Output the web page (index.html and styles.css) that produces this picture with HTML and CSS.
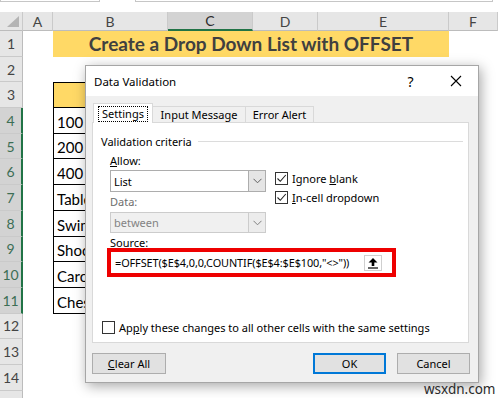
FILE: index.html
```html
<!DOCTYPE html>
<html>
<head>
    <meta charset="UTF-8">
    <title>Data Validation</title>
    <link rel="stylesheet" href="styles.css">
</head>
<body>
    <div class="topbar">
        <div class="namebox"></div>
        <div class="fbar"></div>
    </div>

    <div class="sheet">
        <div class="ch corner"><span class="tri"></span></div>
        <div class="ch">A</div>
        <div class="ch">B</div>
        <div class="ch sel">C</div>
        <div class="ch">D</div>
        <div class="ch">E</div>
        <div class="ch">F</div>

        <div class="rh">1</div><div></div><div class="title">Create a Drop Down List with OFFSET</div><div></div>
        <div class="rh">2</div><div></div><div></div><div></div><div></div><div></div><div></div>
        <div class="rh">3</div><div></div><div class="tb head">Sports</div><div></div><div></div><div></div><div></div>
        <div class="rh sel">4</div><div></div><div class="tb">100 Meter Sprint</div><div></div><div></div><div></div><div></div>
        <div class="rh sel">5</div><div></div><div class="tb">200 Meter Sprint</div><div></div><div></div><div></div><div></div>
        <div class="rh sel">6</div><div></div><div class="tb">400 Meter Sprint</div><div></div><div></div><div></div><div></div>
        <div class="rh sel">7</div><div></div><div class="tb">Table Tennis</div><div></div><div></div><div></div><div></div>
        <div class="rh sel">8</div><div></div><div class="tb">Swimming</div><div></div><div></div><div></div><div></div>
        <div class="rh sel">9</div><div></div><div class="tb">Shooting</div><div></div><div></div><div></div><div></div>
        <div class="rh sel">10</div><div></div><div class="tb">Carom</div><div></div><div></div><div></div><div></div>
        <div class="rh sel">11</div><div></div><div class="tb">Chess</div><div></div><div></div><div></div><div></div>
        <div class="rh">12</div><div></div><div></div><div></div><div></div><div></div><div></div>
        <div class="rh">13</div><div></div><div></div><div></div><div></div><div></div><div></div>
        <div class="rh">14</div><div></div><div></div><div></div><div></div><div></div><div></div>
        <div class="rh">15</div><div></div><div></div><div></div><div></div><div></div><div></div>
    </div>

    <div class="dialog">
        <div class="dlg-title">
            <span>Data Validation</span>
            <span class="tbtn">?</span>
            <span class="tbtn">
                <svg width="12" height="12" viewBox="0 0 12 12"><path d="M1 1 L11 11 M11 1 L1 11" stroke="#000" stroke-width="1.1" fill="none"/></svg>
            </span>
        </div>

        <div class="dlg-body">
            <div class="tabs">
                <div class="tab active"><span class="focus">Settings</span></div>
                <div class="tab">Input Message</div>
                <div class="tab">Error Alert</div>
            </div>

            <div class="panel">
                <div class="legend"><span>Validation criteria</span><span class="rule"></span></div>

                <div class="criteria">
                    <div class="cols">
                        <div class="left">
                            <div class="lbl"><u>A</u>llow:</div>
                            <div class="combo"><span class="val">List</span><span class="arrow"><svg width="9" height="6" viewBox="0 0 9 6"><path d="M0.5 0.8 L4.5 4.8 L8.5 0.8" stroke="#606060" fill="none"/></svg></span></div>
                            <div class="lbl off">Data:</div>
                            <div class="combo off"><span class="val">between</span><span class="arrow"><svg width="9" height="6" viewBox="0 0 9 6"><path d="M0.5 0.8 L4.5 4.8 L8.5 0.8" stroke="#808080" fill="none"/></svg></span></div>
                        </div>
                        <div class="right">
                            <div class="chk"><span class="box"><svg width="11" height="11" viewBox="0 0 11 11"><path d="M1.5 5.5 L4.3 8.3 L9.8 2" stroke="#222" stroke-width="1.1" fill="none"/></svg></span><span>Ignore <u>b</u>lank</span></div>
                            <div class="chk"><span class="box"><svg width="11" height="11" viewBox="0 0 11 11"><path d="M1.5 5.5 L4.3 8.3 L9.8 2" stroke="#222" stroke-width="1.1" fill="none"/></svg></span><span><u>I</u>n-cell dropdown</span></div>
                        </div>
                    </div>

                    <div class="lbl">Source:</div>
                    <div class="redframe">
                        <span class="src">=OFFSET($E$4,0,0,COUNTIF($E$4:$E$100,"&lt;&gt;"))</span>
                        <span class="collapse"><svg width="12" height="12" viewBox="0 0 12 12"><path d="M6 1 L10.5 5.5 L7.3 5.5 L7.3 9 L4.7 9 L4.7 5.5 L1.5 5.5 Z" fill="#000"/><path d="M1 11 L11 11" stroke="#000" stroke-width="1.2"/></svg></span>
                    </div>
                </div>

                <div class="chk apply"><span class="box"></span><span>Ap<u>p</u>ly these changes to all other cells with the same settings</span></div>
            </div>

            <div class="buttons">
                <div class="btn"><span><u>C</u>lear All</span></div>
                <div class="btn ok">OK</div>
                <div class="btn cancel">Cancel</div>
            </div>
        </div>
    </div>

    <div class="mark">wsxdn.com</div>
</body>
</html>
```

FILE: styles.css
```css
* { box-sizing: border-box; }

body {
    margin: 0;
    width: 498px;
    height: 398px;
    overflow: hidden;
    background: #fff;
    font-family: Lato, "Liberation Sans", sans-serif;
    position: relative;
}

.topbar {
    height: 12px;
    display: flex;
    gap: 35px;
}

.namebox { width: 100px; height: 2px; border: 1px solid #c6c6c6; border-top: none; }
.fbar { flex: 1; height: 2px; border: 1px solid #c6c6c6; border-top: none; margin-right: 5px; }

.sheet {
    display: grid;
    grid-template-columns: 23px 30px 115px 85px 65px 131px 49px;
    grid-template-rows: 19px repeat(15, 25.7px);
}

.ch {
    background: #e6e6e6;
    border-right: 1px solid #cacaca;
    border-bottom: 1px solid #bcbcbc;
    font-size: 14px;
    color: #444;
    display: flex;
    align-items: center;
    justify-content: center;
}

.ch.sel { background: #d3d3d3; border-bottom: 2px solid #217346; color: #2b2b2b; }

.corner { position: relative; }
.tri {
    position: absolute;
    right: 3px;
    bottom: 3px;
    width: 0;
    height: 0;
    border-left: 12px solid transparent;
    border-bottom: 11px solid #b4b4b4;
}

.rh {
    background: #e6e6e6;
    border-bottom: 1px solid #cacaca;
    border-right: 1px solid #bcbcbc;
    font-size: 14px;
    color: #444;
    display: flex;
    align-items: center;
    justify-content: center;
}

.rh.sel { background: #d3d3d3; border-right: 2px solid #217346; color: #3c6e55; }

.title {
    grid-column: span 4;
    background: #ffd966;
    color: #404040;
    font-weight: bold;
    font-size: 19px;
    display: flex;
    align-items: center;
    justify-content: center;
}

.tb {
    border: 1px solid #000;
    border-top: none;
    font-size: 15px;
    padding: 0 0 2px 3px;
    display: flex;
    align-items: flex-end;
    white-space: nowrap;
    overflow: hidden;
    color: #000;
}

.tb.head { border-top: 1px solid #000; background: #ffd966; font-weight: bold; justify-content: center; }

/* dialog */
.dialog {
    position: absolute;
    left: 85px;
    top: 65px;
    width: 394px;
    height: 318px;
    border: 1px solid #a6a6a6;
    background: #f0f0f0;
    box-shadow: 2px 3px 12px rgba(0, 0, 0, 0.35);
    font-family: "Noto Sans", sans-serif;
    font-size: 11px;
    color: #000;
}

.dlg-title {
    height: 30px;
    background: #fff;
    display: flex;
    align-items: center;
    padding-left: 8px;
    font-size: 11.5px;
}

.tbtn {
    width: 45px;
    height: 30px;
    display: flex;
    align-items: center;
    justify-content: center;
    font-size: 14px;
}

.tbtn:nth-child(2) { margin-left: auto; }

.dlg-body { padding: 7px 9px 0 6px; }

.tabs {
    display: flex;
    align-items: flex-end;
    height: 20px;
    margin-left: 1px;
    margin-bottom: -1px;
    position: relative;
}

.tab {
    height: 16px;
    margin-bottom: 1px;
    border: 1px solid #d9d9d9;
    border-bottom: none;
    border-left: none;
    display: flex;
    align-items: center;
    justify-content: center;
    background: #f0f0f0;
    width: 93px;
}

.tab.active {
    width: 60px;
    height: 20px;
    margin-bottom: 0;
    background: #fff;
    border-left: 1px solid #d9d9d9;
    align-items: flex-start;
    padding-top: 2px;
}

.tab:last-child { width: 68px; }

.focus { border: 1px dotted #000; padding: 0 3px; height: 16px; line-height: 14px; }

.panel {
    width: 377px;
    height: 221px;
    background: #fff;
    border: 1px solid #d9d9d9;
}

.legend {
    margin-top: 11px;
    height: 14px;
    padding-left: 8px;
    display: flex;
    align-items: center;
}

.rule { flex: 1; border-top: 1px solid #dcdcdc; margin: 0 5px 0 6px; }

.criteria { padding-left: 17px; }

.cols { display: flex; }

.left { width: 156px; }

.lbl { margin-top: 6px; height: 14px; line-height: 14px; }
.left .lbl.off { margin-top: 3px; color: #6d6d6d; }

.combo {
    margin-top: 2px;
    height: 22px;
    border: 1px solid #adadad;
    background: #fff;
    display: flex;
    align-items: center;
}

.combo.off { margin-top: 3px; height: 21px; background: #f0f0f0; border-color: #cccccc; color: #838383; }

.val { flex: 1; padding-left: 3px; }

.arrow {
    width: 17px;
    height: 100%;
    border-left: 1px solid #adadad;
    background: #e5e5e5;
    display: flex;
    align-items: center;
    justify-content: center;
}

.combo.off .arrow { border-left-color: #cccccc; background: #ececec; }

.right { margin-left: 9px; padding-top: 24px; }

.chk { display: flex; align-items: center; height: 13px; margin-bottom: 6px; white-space: nowrap; }

.box {
    width: 13px;
    height: 13px;
    border: 1px solid #333;
    background: #fff;
    margin-right: 4px;
    display: flex;
    align-items: center;
    justify-content: center;
}

.criteria > .lbl { margin-top: 3px; }

.redframe {
    margin: -2px 0 0 -3px;
    width: 289px;
    height: 29px;
    border: 4px solid #ee0000;
    background: #fff;
    display: flex;
    align-items: center;
    padding-left: 4px;
}

.src { flex: 1; white-space: nowrap; font-size: 10.9px; letter-spacing: -0.1px; }

.collapse {
    width: 18px;
    height: 16px;
    margin-right: 10px;
    border: 1px solid #cfcfcf;
    display: flex;
    align-items: center;
    justify-content: center;
}

.apply { margin: 44px 0 0 9px; }

.buttons { display: flex; margin-top: 10px; margin-right: -1px; }

.btn {
    width: 74px;
    height: 21px;
    background: #e1e1e1;
    border: 1px solid #adadad;
    display: flex;
    align-items: center;
    justify-content: center;
}

.btn.ok { margin-left: auto; width: 73px; border: 2px solid #0078d7; }
.btn.cancel { margin-left: 11px; width: 73px; }

.mark {
    position: absolute;
    left: 424px;
    top: 380px;
    font-family: "Noto Sans", sans-serif;
    font-size: 13.5px;
    color: #2a2a2a;
}
```
